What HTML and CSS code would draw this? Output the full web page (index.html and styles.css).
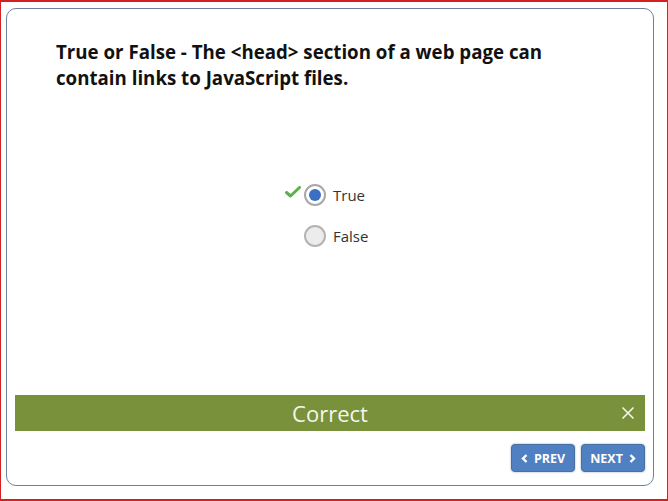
FILE: index.html
```html
<!DOCTYPE html>
<html>
<head>
<meta charset="utf-8">
<link rel="stylesheet" href="styles.css">
</head>
<body>
<div class="frame">
  <div class="card">
    <h1 class="question">True or False - The &lt;head&gt; section of a web page can contain links to JavaScript files.</h1>
    <div class="options">
      <div class="option">
        <svg class="check" width="16" height="12" viewBox="0 0 16 12"><path d="M1.5 6.5 L5.5 10 L14.5 1.5" fill="none" stroke="#5bb04a" stroke-width="3" stroke-linecap="round" stroke-linejoin="round"/></svg>
        <span class="radio selected"><span class="dot"></span></span>
        <span class="label">True</span>
      </div>
      <div class="option">
        <span class="check-space"></span>
        <span class="radio"></span>
        <span class="label">False</span>
      </div>
    </div>
    <div class="spacer"></div>
    <div class="feedback">
      <span class="feedback-text">Correct</span>
      <svg class="close" width="14" height="14" viewBox="0 0 14 14"><path d="M1.5 1.5 L12.5 12.5 M12.5 1.5 L1.5 12.5" stroke="#f4f7ea" stroke-width="1.6" fill="none"/></svg>
    </div>
    <div class="nav">
      <button class="btn"><svg class="chev" width="7" height="9" viewBox="0 0 7 9"><path d="M5.5 1 L2 4.5 L5.5 8" fill="none" stroke="#fff" stroke-width="2.4"/></svg>PREV</button>
      <button class="btn">NEXT<svg class="chev right" width="7" height="9" viewBox="0 0 7 9"><path d="M1.5 1 L5 4.5 L1.5 8" fill="none" stroke="#fff" stroke-width="2.4"/></svg></button>
    </div>
  </div>
</div>
</body>
</html>
```
FILE: styles.css
```css
html, body {
  margin: 0;
  padding: 0;
  background: #fff;
}
.frame {
  width: 668px;
  height: 501px;
  box-sizing: border-box;
  border: 1px solid #d42020;
  border-top-width: 2px;
  border-bottom-width: 2px;
  padding: 6px 13px 13px 5px;
}
.card {
  height: 100%;
  box-sizing: border-box;
  border: 1px solid #6d8299;
  border-radius: 10px;
  display: flex;
  flex-direction: column;
  padding: 0 8px 13px 8px;
  font-family: "Open Sans", sans-serif;
}
.question {
  margin: 30px 0 0 41px;
  font-size: 18.7px;
  font-weight: bold;
  line-height: 26px;
  color: #111;
  width: 530px;
}
.options {
  margin-top: 93px;
  display: flex;
  flex-direction: column;
  gap: 19px;
  padding-left: 271px;
}
.option {
  display: flex;
  align-items: center;
  height: 22px;
}
.check {
  width: 16px;
  margin-top: -6px;
  margin-left: -1px;
  margin-right: 3px;
}
.check-space {
  width: 18px;
}
.radio {
  width: 22px;
  height: 22px;
  box-sizing: border-box;
  border-radius: 50%;
  border: 2px solid #b3b3b3;
  background: #ececec;
  display: flex;
  align-items: center;
  justify-content: center;
}
.radio.selected {
  background: #fff;
  border-color: #a8a8a8;
}
.dot {
  width: 12px;
  height: 12px;
  border-radius: 50%;
  background: #3a6fc4;
}
.label {
  margin-left: 7px;
  font-size: 15px;
  color: #333;
}
.spacer {
  flex: 1;
}
.feedback {
  height: 36px;
  background: #7a913b;
  display: flex;
  align-items: center;
  justify-content: center;
  position: relative;
}
.feedback-text {
  color: #f4f7ea;
  font-size: 22px;
}
.close {
  position: absolute;
  right: 10px;
  top: 11px;
}
.nav {
  display: flex;
  justify-content: flex-end;
  gap: 6px;
  margin-top: 13px;
}
.btn {
  height: 28px;
  box-sizing: border-box;
  padding: 0 8px;
  min-width: 64px;
  border: 1px solid #4a6fa3;
  border-radius: 4px;
  background: #4f80c2;
  box-shadow: 0 0 2px rgba(60, 90, 140, 0.6);
  color: #fff;
  font-family: "Open Sans", sans-serif;
  font-weight: bold;
  font-size: 12.5px;
  display: flex;
  align-items: center;
  justify-content: center;
  gap: 6px;
}
```
